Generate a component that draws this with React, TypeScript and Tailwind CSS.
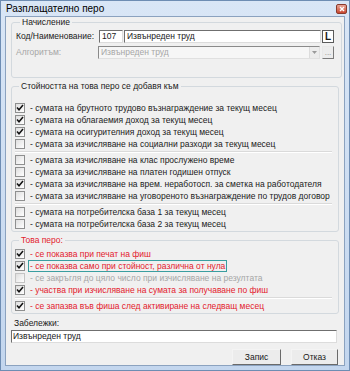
import React from "react";

type Row = {
  checked?: boolean;
  text?: string;
  tone?: "black" | "red" | "gray";
  focus?: boolean;
  sep?: boolean;
};

const sumRows: Row[] = [
  { checked: true, text: "- сумата на брутното трудово възнаграждение за текущ месец" },
  { checked: true, text: "- сумата на облагаемия доход за текущ месец" },
  { checked: true, text: "- сумата на осигурителния доход за текущ месец" },
  { checked: false, text: "- сумата за изчисляване на социални разходи за текущ месец" },
  { sep: true },
  { checked: false, text: "- сумата за изчисляване на клас прослужено време" },
  { checked: false, text: "- сумата за изчисляване на платен годишен отпуск" },
  { checked: true, text: "- сумата за изчисляване на врем. неработосп. за сметка на работодателя" },
  { checked: false, text: "- сумата за изчисляване на уговореното възнаграждение по трудов договор" },
  { sep: true },
  { checked: false, text: "- сумата на потребителска база 1 за текущ месец" },
  { checked: false, text: "- сумата на потребителска база 2 за текущ месец" },
];

const itemRows: Row[] = [
  { checked: true, tone: "red", text: "- се показва при печат на фиш" },
  { checked: true, tone: "red", focus: true, text: "- се показва само при стойност, различна от нула" },
  { checked: false, tone: "gray", text: "- се закръгля до цяло число при изчисляване на резултата" },
  { checked: true, tone: "red", text: "- участва при изчисляване на сумата за получаване по фиш" },
  { sep: true },
  { checked: true, tone: "red", text: "- се запазва във фиша след активиране на следващ месец" },
];

function Check({ checked, disabled }: { checked?: boolean; disabled?: boolean }) {
  return (
    <span
      className={
        "flex h-[10px] w-[10px] shrink-0 items-center justify-center border bg-gradient-to-br from-[#dedede] to-white " +
        (disabled ? "border-[#c4c4c4]" : "border-[#8e8f8f]")
      }
    >
      {checked && (
        <svg width="8" height="8" viewBox="0 0 8 8">
          <path d="M1 3.5 L3 5.8 L7 1" fill="none" stroke="#111" strokeWidth="1.5" />
        </svg>
      )}
    </span>
  );
}

function Rows({ rows }: { rows: Row[] }) {
  return (
    <div className="flex flex-col">
      {rows.map((r, i) =>
        r.sep ? (
          <div key={i} className="my-[1px] mr-[4px] h-[2px] border-t border-b border-t-[#dadada] border-b-white" />
        ) : (
          <div key={i} className="flex h-[12px] items-center gap-[3px]">
            <Check checked={r.checked} disabled={r.tone === "gray"} />
            <span
              className={
                "whitespace-nowrap px-[1px] leading-[10px] " +
                (r.tone === "red"
                  ? "text-[#e3202c]"
                  : r.tone === "gray"
                    ? "text-[#a6a6a6]"
                    : "text-[#1a1a1a]") +
                (r.focus ? " border border-[#3a9ea0]" : " border border-transparent")
              }
            >
              {r.text}
            </span>
          </div>
        ),
      )}
    </div>
  );
}

function Group({
  title,
  red,
  className,
  children,
}: {
  title: string;
  red?: boolean;
  className?: string;
  children: React.ReactNode;
}) {
  return (
    <fieldset className={"rounded-[3px] border border-[#d3d9de] " + (className ?? "")}>
      <legend className={"ml-[4px] px-[2px] leading-[11px] " + (red ? "text-[#e3202c]" : "text-[#1a1a1a]")}>
        {title}
      </legend>
      {children}
    </fieldset>
  );
}

export default function App() {
  return (
    <div className="flex h-[371px] w-[350px] flex-col border border-[#6e8db3] bg-gradient-to-b from-[#d9e6f6] to-[#c3d6ee] font-['Liberation_Sans',Arial,sans-serif] text-[8.5px] text-[#1a1a1a]">
      {/* title bar */}
      <div className="flex h-[17px] items-center justify-between pl-[5px] pr-[2px]">
        <span className="text-[10px] text-black">Разплащателно перо</span>
        <span className="flex h-[10px] w-[11px] items-center justify-center rounded-[2px] border border-[#8a3a2c] bg-gradient-to-b from-[#e8a596] to-[#c8452f]">
          <svg width="6" height="6" viewBox="0 0 6 6">
            <path d="M1 1 L5 5 M5 1 L1 5" stroke="white" strokeWidth="1.4" />
          </svg>
        </span>
      </div>

      {/* client */}
      <div className="mx-[4px] mb-[5px] flex flex-1 flex-col border border-[#8ba2bf] bg-[#f0f0f0] px-[5px]">
        <Group title="Начисление" className="pb-[18px] pl-[4px] pr-[7px]">
          <div className="mt-[2px] flex h-[13px] items-center">
            <span className="w-[83px]">Код/Наименование:</span>
            <span className="flex h-[13px] w-[24px] items-center border border-t-[#6f6f6f] border-l-[#6f6f6f] border-r-[#dcdcdc] border-b-[#dcdcdc] bg-white pl-[2px]">
              107
            </span>
            <span className="ml-[1px] flex h-[13px] w-[197px] items-center border border-t-[#6f6f6f] border-l-[#6f6f6f] border-r-[#dcdcdc] border-b-[#dcdcdc] bg-white pl-[2px]">
              Извънреден труд
            </span>
            <span className="ml-[1px] flex h-[13px] w-[12px] items-center justify-center border border-[#5a5a5a] bg-white text-[10px] font-bold leading-none">
              L
            </span>
          </div>
          <div className="mt-[3px] flex h-[13px] items-center">
            <span className="w-[82px] text-[#a6a6a6]">Алгоритъм:</span>
            <span className="flex h-[13px] w-[222px] items-center justify-between border border-t-[#8a8a8a] border-l-[#8a8a8a] border-r-[#e0e0e0] border-b-[#e0e0e0] bg-[#f6f6f6] pl-[2px] text-[#a6a6a6]">
              Извънреден труд
              <span className="flex h-[11px] w-[10px] items-center justify-center border-l border-[#dcdcdc] bg-[#ececec]">
                <svg width="5" height="3" viewBox="0 0 5 3">
                  <path d="M0 0 L5 0 L2.5 3 Z" fill="#9a9a9a" />
                </svg>
              </span>
            </span>
            <span className="ml-[2px] flex h-[13px] w-[12px] items-end justify-center border border-t-[#e8e8e8] border-l-[#e8e8e8] border-r-[#7a7a7a] border-b-[#7a7a7a] bg-[#ececec] pb-[2px] text-[8px] leading-[6px] text-[#8a8a8a]">
              ...
            </span>
          </div>
        </Group>

        <Group title="Стойността на това перо се добавя към" className="mt-[3px] pb-[1px] pl-[3px] pr-[2px]">
          <div className="mt-[10px]">
            <Rows rows={sumRows} />
          </div>
        </Group>

        <Group title="Това перо:" red className="mt-[3px] pb-[1px] pl-[3px] pr-[2px]">
          <div className="mt-[2px]">
            <Rows rows={itemRows} />
          </div>
        </Group>

        <div className="mt-[3px] pl-[3px] leading-[12px]">Забележки:</div>
        <div className="mt-[1px] mr-[2px] flex h-[13px] items-center border border-t-[#6f6f6f] border-l-[#6f6f6f] border-r-[#dcdcdc] border-b-[#dcdcdc] bg-white pl-[1px]">
          Извънреден труд
        </div>

        <div className="mt-[6px] flex justify-end gap-[10px] pr-[1px]">
          <button className="h-[16px] w-[49px] border border-t-[#f4f4f4] border-l-[#f4f4f4] border-r-[#6a6a6a] border-b-[#6a6a6a] bg-[#ececec] text-[8.5px]">
            Запис
          </button>
          <button className="h-[16px] w-[47px] border border-t-[#f4f4f4] border-l-[#f4f4f4] border-r-[#6a6a6a] border-b-[#6a6a6a] bg-[#ececec] text-[8.5px]">
            Отказ
          </button>
        </div>
      </div>
    </div>
  );
}
